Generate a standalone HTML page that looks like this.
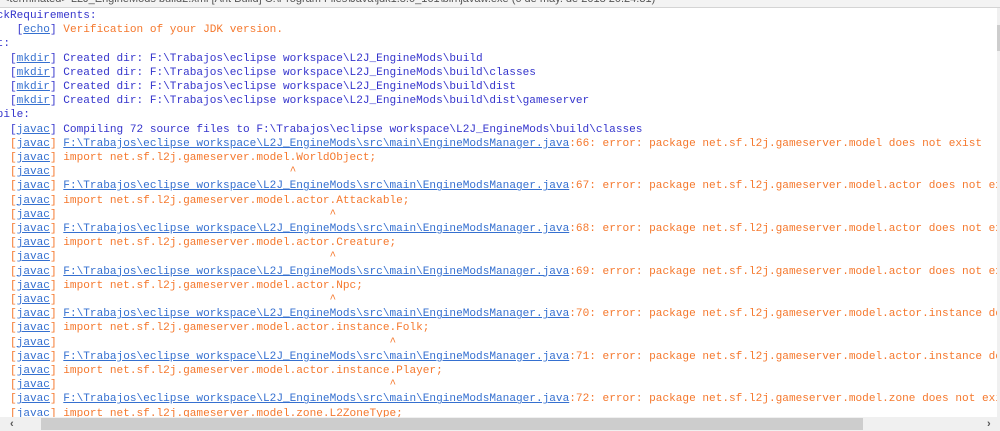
<!DOCTYPE html>
<html><head><meta charset="utf-8"><style>
html,body{margin:0;width:1000px;height:431px;overflow:hidden;background:#fff}
#wrap{position:absolute;left:0;top:0;width:997px;height:417px;overflow:hidden}
#hdr{position:absolute;left:0;top:0;width:1000px;height:7px;background:#f3f3f3;border-bottom:1px solid #d4d4d4;overflow:hidden}
#hdr span{position:absolute;left:3px;top:-7px;font:11px "Liberation Sans",sans-serif;color:#555;white-space:nowrap}
pre{position:absolute;left:-23.3px;top:9px;margin:0;font:11.1px/14.2px "Liberation Mono",monospace;color:#3434cc;white-space:pre}
.o{color:#f5782d}
a{color:#3570d0;text-decoration:underline}
#hs{position:absolute;left:0;top:417px;width:1000px;height:14px;background:#f0f0f0}
#th{position:absolute;left:41px;top:418px;width:822px;height:12px;background:#cdcdcd}
#vs{position:absolute;left:997px;top:8px;width:3px;height:409px;background:#f0f0f0}
#vt{position:absolute;left:997px;top:25px;width:3px;height:26px;background:#cdcdcd}
.ar{position:absolute;top:417px;font:bold 11px "Liberation Sans",sans-serif;color:#555;line-height:14px}
</style></head><body>
<div id="wrap">
<pre>checkRequirements:
      [<a>echo</a>] <span class="o">Verification of your JDK version.</span>
init:
     [<a>mkdir</a>] Created dir: F:\Trabajos\eclipse workspace\L2J_EngineMods\build
     [<a>mkdir</a>] Created dir: F:\Trabajos\eclipse workspace\L2J_EngineMods\build\classes
     [<a>mkdir</a>] Created dir: F:\Trabajos\eclipse workspace\L2J_EngineMods\build\dist
     [<a>mkdir</a>] Created dir: F:\Trabajos\eclipse workspace\L2J_EngineMods\build\dist\gameserver
compile:
     [<a>javac</a>] Compiling 72 source files to F:\Trabajos\eclipse workspace\L2J_EngineMods\build\classes
<span class="o">     [<a>javac</a>] <a>F:\Trabajos\eclipse workspace\L2J_EngineMods\src\main\EngineModsManager.java</a>:66: error: package net.sf.l2j.gameserver.model does not exist
     [<a>javac</a>] import net.sf.l2j.gameserver.model.WorldObject;
     [<a>javac</a>]                                   ^
     [<a>javac</a>] <a>F:\Trabajos\eclipse workspace\L2J_EngineMods\src\main\EngineModsManager.java</a>:67: error: package net.sf.l2j.gameserver.model.actor does not exist
     [<a>javac</a>] import net.sf.l2j.gameserver.model.actor.Attackable;
     [<a>javac</a>]                                         ^
     [<a>javac</a>] <a>F:\Trabajos\eclipse workspace\L2J_EngineMods\src\main\EngineModsManager.java</a>:68: error: package net.sf.l2j.gameserver.model.actor does not exist
     [<a>javac</a>] import net.sf.l2j.gameserver.model.actor.Creature;
     [<a>javac</a>]                                         ^
     [<a>javac</a>] <a>F:\Trabajos\eclipse workspace\L2J_EngineMods\src\main\EngineModsManager.java</a>:69: error: package net.sf.l2j.gameserver.model.actor does not exist
     [<a>javac</a>] import net.sf.l2j.gameserver.model.actor.Npc;
     [<a>javac</a>]                                         ^
     [<a>javac</a>] <a>F:\Trabajos\eclipse workspace\L2J_EngineMods\src\main\EngineModsManager.java</a>:70: error: package net.sf.l2j.gameserver.model.actor.instance does not exist
     [<a>javac</a>] import net.sf.l2j.gameserver.model.actor.instance.Folk;
     [<a>javac</a>]                                                  ^
     [<a>javac</a>] <a>F:\Trabajos\eclipse workspace\L2J_EngineMods\src\main\EngineModsManager.java</a>:71: error: package net.sf.l2j.gameserver.model.actor.instance does not exist
     [<a>javac</a>] import net.sf.l2j.gameserver.model.actor.instance.Player;
     [<a>javac</a>]                                                  ^
     [<a>javac</a>] <a>F:\Trabajos\eclipse workspace\L2J_EngineMods\src\main\EngineModsManager.java</a>:72: error: package net.sf.l2j.gameserver.model.zone does not exist
     [<a>javac</a>] import net.sf.l2j.gameserver.model.zone.L2ZoneType;</span>
</pre>
</div>
<div id="hdr"><span>&lt;terminated&gt; L2J_EngineMods build2.xml [Ant Build] C:\Program Files\Java\jdk1.8.0_161\bin\javaw.exe (6 de may. de 2018 20:24:31)</span></div>
<div id="vs"></div><div id="vt"></div>
<div id="hs"></div><div id="th"></div>
<div class="ar" style="left:10px">&lsaquo;</div>
<div class="ar" style="left:987px">&rsaquo;</div>
</body></html>
